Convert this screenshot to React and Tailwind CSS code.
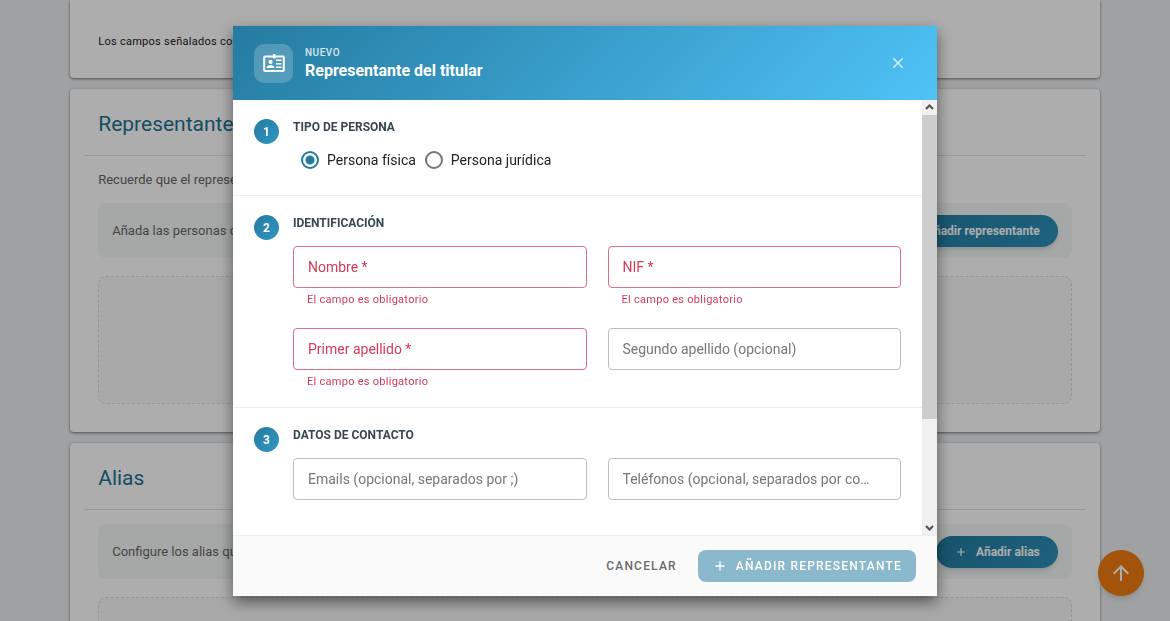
import { useState } from 'react';

function PlusIcon({ className }) {
  return (
    <svg className={className} viewBox="0 0 24 24" fill="currentColor" aria-hidden="true">
      <path d="M19 13h-6v6h-2v-6H5v-2h6V5h2v6h6v2z" />
    </svg>
  );
}

function BadgeIcon() {
  return (
    <svg className="h-6 w-6" viewBox="0 0 24 24" fill="currentColor" aria-hidden="true">
      <path
        fillRule="evenodd"
        d="M3 4.500h8V3h2.500v1.500H21A1.800 1.800 0 0 1 22.800 6.300v13a1.800 1.800 0 0 1-1.800 1.700H3a1.800 1.800 0 0 1-1.800-1.700V6.300A1.800 1.800 0 0 1 3 4.500zm.2 2V19h17.600V6.500h-7.300v1H11v-1H3.200z"
      />
      <path d="M8.500 8.800a2.100 2.100 0 1 1 0 4.200 2.100 2.100 0 0 1 0-4.200zM4.800 17v-1c0-1.300 2.500-2 3.700-2s3.700.7 3.700 2v1H4.800z" />
      <path d="M14 8.500h5.500V10H14zM14 12h5.500v1.500H14zM14 15.500h5.500V17H14z" />
    </svg>
  );
}

function Card({ title, children }) {
  return (
    <section className="rounded bg-white px-[14px] pb-7 shadow-[0_1px_3px_rgba(0,0,0,0.5)]">
      <h2 className="border-b border-black/12 px-[14px] pt-[21px] pb-[17px] text-[21px] leading-7 text-[#1d7296]">{title}</h2>
      {children}
    </section>
  );
}

function Toolbar({ text, action }) {
  return (
    <div className="mx-[14px] flex h-[55px] items-center justify-between rounded-lg bg-[#f4f8f7] px-[14px]">
      <p className="text-[13px] text-[#666]">{text}</p>
      <button
        type="button"
        className="flex h-8 items-center gap-2 rounded-full bg-linear-135 from-[#217a9d] to-[#2d91bb] px-[18px] text-xs font-bold text-white shadow-md"
      >
        <PlusIcon className="h-[14px] w-[14px]" />
        {action}
      </button>
    </div>
  );
}

function EmptyBox() {
  return <div className="mx-[14px] mt-[18px] h-32 rounded-lg border border-dashed border-[#dcdcdc] bg-[#f9f9f9]" />;
}

function Step({ number, title, children }) {
  return (
    <section className="flex gap-[14px] border-b border-[#eee] px-[21px] pt-[19px] pb-[14px] last:border-b-0 last:pb-20">
      <span className="flex h-[25px] w-[25px] shrink-0 items-center justify-center rounded-full bg-linear-135 from-[#247ba0] to-[#3097c3] text-xs font-bold text-white">
        {number}
      </span>
      <div className="min-w-0 flex-1">
        <h3 className="text-xs leading-4 font-bold text-[#37474f] uppercase">{title}</h3>
        {children}
      </div>
    </section>
  );
}

function Field({ id, label, required }) {
  const border = required ? 'border-[#dd7084]' : 'border-[#bdbdbd]';
  const color = required ? 'text-[#d23a58]' : 'text-[#777]';
  return (
    <div className="relative h-16">
      <input
        id={id}
        placeholder=" "
        className={`peer h-[42px] w-full rounded border bg-white px-[14px] text-sm text-[#222] outline-none ${border}`}
      />
      <label
        htmlFor={id}
        className={`pointer-events-none absolute top-0 right-6 left-[15px] truncate text-sm leading-[42px] peer-not-placeholder-shown:hidden ${color}`}
      >
        {label}
      </label>
      {required && <p className="px-[14px] pt-1 text-[11px] leading-4 tracking-wide text-[#d23a58]">El campo es obligatorio</p>}
    </div>
  );
}

function Radio({ label, value, selected, onSelect }) {
  return (
    <label className="flex items-center gap-2 text-sm text-[#222]">
      <input
        type="radio"
        name="tipo"
        value={value}
        checked={selected}
        onChange={() => onSelect(value)}
        className="h-[18px] w-[18px] appearance-none rounded-full border-2 border-[#757575] checked:border-[#247ba0] checked:bg-[radial-gradient(circle,#247ba0_4px,transparent_5px)]"
      />
      {label}
    </label>
  );
}

function ScrollRail() {
  return (
    <div className="flex w-[15px] shrink-0 flex-col bg-[#f0f0f0] text-[#505050]" aria-hidden="true">
      <svg className="h-[15px] w-[15px]" viewBox="0 0 15 15" fill="none" stroke="currentColor" strokeWidth="2">
        <path d="M4 9l3.500-3.500L11 9" />
      </svg>
      <div className="flex-1">
        <div className="h-3/4 bg-[#cdcdcd]" />
      </div>
      <svg className="h-[15px] w-[15px]" viewBox="0 0 15 15" fill="none" stroke="currentColor" strokeWidth="2">
        <path d="M4 6l3.500 3.500L11 6" />
      </svg>
    </div>
  );
}

function RepresentanteDialog() {
  const [tipo, setTipo] = useState('fisica');

  return (
    <div
      role="dialog"
      aria-labelledby="dialog-title"
      className="flex max-h-full w-full max-w-[704px] flex-col bg-white shadow-[0_6px_14px_rgba(0,0,0,0.5)]"
    >
      <header className="flex h-[74px] shrink-0 items-center gap-3 bg-linear-135 from-[#247ba0] to-[#4fc3f7] px-[21px] text-white">
        <span className="flex h-[39px] w-[39px] items-center justify-center rounded-[10px] bg-white/20">
          <BadgeIcon />
        </span>
        <div className="flex-1">
          <p className="text-[10px] leading-4 font-medium tracking-wider text-white/80">NUEVO</p>
          <h2 id="dialog-title" className="text-base leading-5 font-bold">Representante del titular</h2>
        </div>
        <button type="button" aria-label="Cerrar" className="flex h-9 w-9 items-center justify-center text-white/75">
          <svg className="h-[18px] w-[18px]" viewBox="0 0 24 24" fill="currentColor" aria-hidden="true">
            <path d="M19 6.410L17.590 5 12 10.590 6.410 5 5 6.410 10.590 12 5 17.590 6.410 19 12 13.410 17.590 19 19 17.590 13.410 12z" />
          </svg>
        </button>
      </header>

      <div className="flex min-h-0 flex-1">
        <form className="min-w-0 flex-1 overflow-y-auto [scrollbar-width:none]">
          <Step number={1} title="Tipo de persona">
            <div className="mt-1 flex h-[42px] items-center gap-[9px] pl-2">
              <Radio label="Persona física" value="fisica" selected={tipo === 'fisica'} onSelect={setTipo} />
              <Radio label="Persona jurídica" value="juridica" selected={tipo === 'juridica'} onSelect={setTipo} />
            </div>
          </Step>
          <Step number={2} title="Identificación">
            <div className="mt-[15px] grid grid-cols-2 gap-x-[21px] gap-y-[18px] pb-px">
              <Field id="nombre" label="Nombre *" required />
              <Field id="nif" label="NIF *" required />
              <Field id="apellido1" label="Primer apellido *" required />
              <Field id="apellido2" label="Segundo apellido (opcional)" />
            </div>
          </Step>
          <Step number={3} title="Datos de contacto">
            <div className="mt-[15px] grid grid-cols-2 gap-x-[21px]">
              <Field id="emails" label="Emails (opcional, separados por ;)" />
              <Field id="telefonos" label="Teléfonos (opcional, separados por comas)" />
            </div>
          </Step>
        </form>
        <ScrollRail />
      </div>

      <footer className="flex h-[61px] shrink-0 items-center justify-end gap-[21px] border-t border-[#eee] bg-[#fafafa] px-[21px]">
        <button type="button" className="text-xs font-medium tracking-widest text-[#6b6b6b]">CANCELAR</button>
        <button
          type="button"
          className="flex h-8 items-center gap-2 rounded-lg bg-[#8ab8cd] px-[14px] text-xs font-medium tracking-widest text-white"
        >
          <PlusIcon className="h-4 w-4" />
          AÑADIR REPRESENTANTE
        </button>
      </footer>
    </div>
  );
}

export default function App() {
  return (
    <div className="h-screen overflow-hidden bg-[#eaedf0] font-[Roboto,sans-serif]">
      <main className="mx-auto flex w-[88%] flex-col gap-[11px]">
        <section className="rounded-b bg-white px-7 pt-[34px] pb-7 shadow-[0_1px_3px_rgba(0,0,0,0.5)]">
          <p className="text-[11px] leading-4 tracking-wide text-[#222]">Los campos señalados con (*) son obligatorios</p>
        </section>

        <Card title="Representante del titular">
          <p className="px-[14px] pt-[14px] pb-[13px] text-[13px] leading-5 text-[#666]">
            Recuerde que el representante debe estar autorizado.
          </p>
          <Toolbar text="Añada las personas que representan al titular." action="Añadir representante" />
          <EmptyBox />
        </Card>

        <Card title="Alias">
          <div className="pt-[14px]">
            <Toolbar text="Configure los alias que desee utilizar." action="Añadir alias" />
          </div>
          <EmptyBox />
        </Card>
      </main>

      <button
        type="button"
        aria-label="Subir"
        className="fixed right-[26px] bottom-[25px] flex h-[46px] w-[46px] items-center justify-center rounded-full bg-[#f07c10] text-white shadow-md"
      >
        <svg className="h-6 w-6" viewBox="0 0 24 24" fill="currentColor" aria-hidden="true">
          <path d="M4 12l1.410 1.410L11 7.830V20h2V7.830l5.580 5.590L20 12l-8-8-8 8z" />
        </svg>
      </button>

      <div className="fixed inset-0 flex items-center justify-center bg-black/32 pt-[26px] pb-[25px]">
        <RepresentanteDialog />
      </div>
    </div>
  );
}
